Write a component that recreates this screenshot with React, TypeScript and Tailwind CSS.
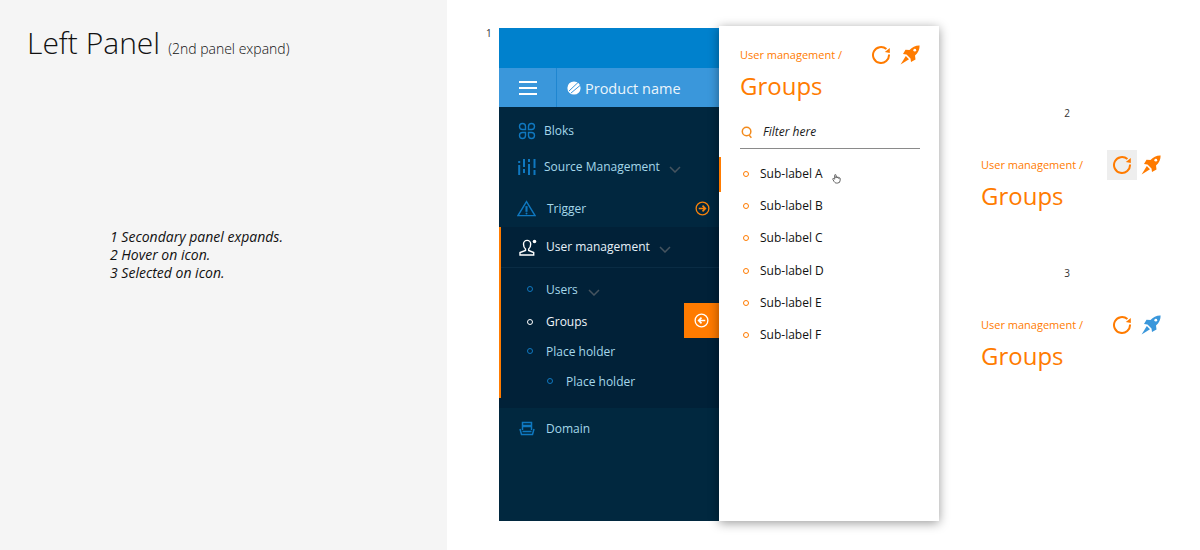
import React from "react";

const font = { fontFamily: '"Open Sans", sans-serif' };

function Refresh({ className = "" }: { className?: string }) {
  return (
    <svg viewBox="0 0 20 20" width="20" height="20" className={className} fill="none">
      <path d="M18 9.500a8 8 0 1 1-2.600-5.400" stroke="currentColor" strokeWidth="2" />
      <path d="M18.800 3 L18.800 8 L13.800 7 Z" fill="currentColor" />
    </svg>
  );
}

function Rocket({ className = "" }: { className?: string }) {
  return (
    <svg viewBox="0 0 20 20" width="20" height="20" className={className} fill="currentColor">
      <path d="M19.6.4c.2 3.600-1.600 7.600-4.600 10.100l.5 4-4.500 2.500-.5-3.500-4-4-3.500-.5 2.500-4.200 4 .2c2.500-3 6.500-4.800 10.100-4.600z" />
      <path d="M5.800 11 9 14.200.6 19.600z" />
      <circle cx="14.800" cy="5.200" r="1.400" fill="#fff" />
    </svg>
  );
}

function Chevron({ className = "" }: { className?: string }) {
  return (
    <svg viewBox="0 0 12 7" width="12" height="7" className={className} fill="none" stroke="#46545f" strokeWidth="1.5">
      <path d="M1 1l5 5 5-5" />
    </svg>
  );
}

function Dot({ cls }: { cls: string }) {
  return <span className={`block w-[6px] h-[6px] rounded-full border-[1.5px] ${cls}`} />;
}

function Heading({ rocket = "text-[#ff7b00]", hover = false }: { rocket?: string; hover?: boolean }) {
  return (
    <div className="w-[180px]">
      <div className="flex items-center h-[30px]">
        <span className="text-[11px] text-[#ff7b00] w-[126px]">User management /</span>
        <span className={`flex items-center justify-center w-[30px] h-[30px] text-[#ff7b00] ${hover ? "bg-[#eeeeee]" : ""}`}>
          <Refresh />
        </span>
        <span className="ml-[4px] w-[20px] h-[20px]">
          <Rocket className={rocket} />
        </span>
      </div>
      <div className="text-[24px] leading-[32px] text-[#ff7b00]">Groups</div>
    </div>
  );
}

function NavRow({ icon, label, ml }: { icon: React.ReactNode; label: string; ml: string }) {
  return (
    <div className="flex items-center h-[36px]">
      <span className="w-[19px] ml-[18px] flex justify-center">{icon}</span>
      <span className={`text-[12px] text-[#a5d8ea] ${ml}`}>{label}</span>
      {label === "Source Management" && <Chevron className="ml-[9px] mt-[4px]" />}
    </div>
  );
}

export default function App() {
  const subs = ["Sub-label A", "Sub-label B", "Sub-label C", "Sub-label D", "Sub-label E", "Sub-label F"];
  return (
    <div className="flex w-[1200px] h-[550px] bg-white overflow-hidden" style={font}>
      {/* notes */}
      <div className="w-[447px] h-full bg-[#f5f5f5] pl-[27px] pt-[22px] shrink-0">
        <div className="flex items-baseline text-[#111]">
          <span className="text-[30px] leading-[42px] font-light">Left Panel</span>
          <span className="text-[14px] font-light ml-[8px]">(2nd panel expand)</span>
        </div>
        <div className="ml-[83px] mt-[164px] text-[14px] leading-[18px] italic text-[#111]">
          <div>1 Secondary panel expands.</div>
          <div>2 Hover on icon.</div>
          <div>3 Selected on icon.</div>
        </div>
      </div>

      {/* marker */}
      <div className="ml-[39px] w-[13px] pt-[26px] text-[10px] leading-[14px] text-[#333]">1</div>

      {/* primary sidebar */}
      <div className="relative w-[220px] h-[493px] mt-[28px] bg-[#01273f] flex flex-col shrink-0">
        <div className="h-[40px] bg-[#0081cd]" />
        <div className="h-[39px] bg-[#3a97db] flex items-center">
          <div className="w-[58px] h-full flex items-center justify-center border-r border-[#1f86d0]">
            <span className="flex flex-col gap-[4px]">
              <span className="block w-[18px] h-[2px] bg-white" />
              <span className="block w-[18px] h-[2px] bg-white" />
              <span className="block w-[18px] h-[2px] bg-white" />
            </span>
          </div>
          <svg viewBox="0 0 14 14" width="14" height="14" className="ml-[10px] mt-[1px]">
            <circle cx="7" cy="7" r="6.600" fill="#fff" />
            <path d="M2 10 L11 1.500 M4 12 L13 4.500" stroke="#3a97db" strokeWidth="1" />
          </svg>
          <span className="ml-[4px] text-[14.5px] text-[#eaf5fc] mt-[2px]">Product name</span>
        </div>

        <div className="pt-[6px]">
          <NavRow
            ml="ml-[8px]"
            label="Bloks"
            icon={
              <svg viewBox="0 0 18 18" width="18" height="18" fill="none" stroke="#0f78c0" strokeWidth="1.400">
                <path d="M7.500 7.500H4.500a3 3 0 1 1 3-3zM10.500 7.500V4.500a3 3 0 1 1 3 3zM7.500 10.500V13.500a3 3 0 1 1-3-3zM10.500 10.500H13.500a3 3 0 1 1-3 3z" />
              </svg>
            }
          />
          <NavRow
            ml="ml-[8px]"
            label="Source Management"
            icon={
              <svg viewBox="0 0 18 16" width="18" height="16" fill="#0f78c0">
                <rect x="0.200" y="6" width="2" height="10" /><rect x="0.200" y="2" width="2" height="2" />
                <rect x="5" y="0" width="2" height="8" /><rect x="5" y="10" width="2" height="4" />
                <rect x="10" y="0" width="2" height="3" /><rect x="10" y="5" width="2" height="11" />
                <rect x="15.500" y="0" width="2" height="9" /><rect x="15.500" y="11" width="2" height="5" />
              </svg>
            }
          />
          <div className="relative mt-[6px]">
            <NavRow
              ml="ml-[11px]"
              label="Trigger"
              icon={
                <svg viewBox="0 0 20 17" width="20" height="17" fill="none" stroke="#0f78c0" strokeWidth="1.500" className="-mt-[2px]">
                  <path d="M10 1.200 1 16h18z" />
                  <path d="M10 6v6" strokeWidth="2.200" />
                  <circle cx="10" cy="13.800" r="1" fill="#0f78c0" stroke="none" />
                </svg>
              }
            />
            <svg viewBox="0 0 16 16" width="15" height="15" className="absolute right-[9px] top-[10px]" fill="none" stroke="#f7820c" strokeWidth="1.400">
              <circle cx="8" cy="8" r="6.800" />
              <path d="M4 8h6.500M8 5l3 3-3 3" strokeWidth="1.800" />
            </svg>
          </div>
        </div>

        {/* expanded block */}
        <div className="h-[181px] bg-[#012138]">
          <div className="h-[171px] border-l-2 border-[#ff7b00]">
            <div className="h-[41px] flex items-center border-b border-[#0a2c44]">
              <svg viewBox="0 0 18 17" width="18" height="17" className="ml-[18px]" fill="none" stroke="#fff" strokeWidth="1.400">
                <path d="M6.500 10c-1.300-1-2-3-2-5a3.600 3.600 0 0 1 7.200 0c0 2-.7 4-2 5v1.500l5 2v2.500H1v-2.500l5.500-2z" />
                <circle cx="15.500" cy="2.500" r="1.800" fill="#fff" stroke="none" />
              </svg>
              <span className="ml-[9px] text-[12px] text-[#e6f2f8]">User management</span>
              <Chevron className="ml-[9px] mt-[4px]" />
            </div>
            <div className="pt-[6px]">
              <div className="flex items-center h-[32px]">
                <span className="ml-[26px] -mt-[3px]"><Dot cls="border-[#0f78c0]" /></span>
                <span className="ml-[13px] text-[12px] text-[#a5d8ea]">Users</span>
                <Chevron className="ml-[10px] mt-[4px]" />
              </div>
              <div className="flex items-center h-[31px]">
                <span className="ml-[26px]"><Dot cls="border-white" /></span>
                <span className="ml-[13px] text-[12px] text-[#f0f5f8]">Groups</span>
              </div>
              <div className="flex items-center h-[30px]">
                <span className="ml-[26px] -mt-[3px]"><Dot cls="border-[#0f78c0]" /></span>
                <span className="ml-[13px] text-[12px] text-[#a5d8ea]">Place holder</span>
              </div>
              <div className="flex items-center h-[30px]">
                <span className="ml-[46px] -mt-[3px]"><Dot cls="border-[#0f78c0]" /></span>
                <span className="ml-[13px] text-[12px] text-[#a5d8ea]">Place holder</span>
              </div>
            </div>
          </div>
        </div>

        <div className="flex-1 bg-[#01283f]">
          <div className="h-[41px] flex items-center">
            <svg viewBox="0 0 16 15" width="16" height="15" className="ml-[20px]" fill="none" stroke="#0f78c0" strokeWidth="1.500">
              <path d="M3.500 9V1.500h9V9" />
              <path d="M3.500 5h9" strokeWidth="2.500" />
              <path d="M1 8l1.500 5.500h11L15 8" />
              <path d="M3.500 10.500h9" />
            </svg>
            <span className="ml-[11px] text-[12px] text-[#a5d8ea]">Domain</span>
          </div>
        </div>

        {/* collapse tab */}
        <div className="absolute left-[185px] top-[275px] w-[35px] h-[35px] bg-[#ff7b00] flex items-center justify-center">
          <svg viewBox="0 0 16 16" width="15" height="15" fill="none" stroke="#fff" strokeWidth="1.400">
            <circle cx="8" cy="8" r="6.800" />
            <path d="M12 8H5.500M8 5 5 8l3 3" strokeWidth="1.800" />
          </svg>
        </div>
      </div>

      {/* secondary panel */}
      <div className="relative w-[220px] h-[495px] mt-[26px] bg-white shadow-[0_2px_10px_rgba(0,0,0,0.4)] shrink-0 z-10">
        <div className="pl-[21px] pr-[19px] pt-[14px]">
          <Heading />
          <div className="flex items-center h-[33px] mt-[14px] border-b border-[#8a8a8a] w-[180px]">
            <svg viewBox="0 0 14 14" width="13" height="13" fill="none" stroke="#f28a1c" strokeWidth="1.600" className="ml-[1px]">
              <circle cx="6" cy="6" r="4.600" />
              <path d="M8.800 10l2.400 2.600" />
            </svg>
            <span className="ml-[9px] text-[12px] italic text-[#1a1a1a]">Filter here</span>
          </div>
        </div>
        <div className="relative mt-[7px] flex flex-col">
          <span className="absolute left-0 top-[1px] w-[2px] h-[35px] bg-[#ff7b00]" />
          {subs.map((s, i) => (
            <div key={s} className={`flex items-center h-[32.2px] ${i === 0 ? "mt-[2px]" : ""}`}>
              <span className="ml-[24px]"><Dot cls="border-[#ff7b00]" /></span>
              <span className="ml-[11px] text-[12px] text-[#111]">{s}</span>
            </div>
          ))}
          <svg viewBox="0 0 24 24" width="11" height="11" className="absolute left-[112px] top-[17px]" fill="none" stroke="#555" strokeWidth="2">
            <path d="M8 13V5a1.500 1.500 0 0 1 3 0v6 M11 11V9.500a1.500 1.500 0 0 1 3 0V11 M14 11v-.5a1.500 1.500 0 0 1 3 0V12 M17 12a1.500 1.500 0 0 1 3 0v4a6 6 0 0 1-6 6h-2c-3 0-4-2-5-3l-3-5c-1-2 1-3 3-1l1 1" />
          </svg>
        </div>
      </div>

      {/* states */}
      <div className="ml-[42px] w-[180px] flex flex-col shrink-0">
        <div className="mt-[106px] text-center text-[10px] leading-[14px] text-[#333] pl-[7px] pr-[15px]">2</div>
        <div className="mt-[30px]"><Heading hover /></div>
        <div className="mt-[54px] text-center text-[10px] leading-[14px] text-[#333] pl-[7px] pr-[15px]">3</div>
        <div className="mt-[30px]"><Heading rocket="text-[#3a97db]" /></div>
      </div>
    </div>
  );
}
